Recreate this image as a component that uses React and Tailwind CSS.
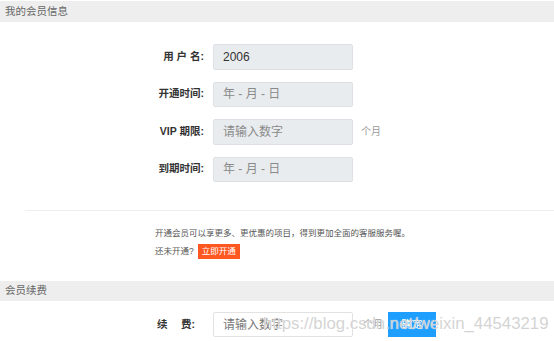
import React from 'react';

const font = { fontFamily: '"Liberation Sans", "Noto Sans CJK SC", sans-serif' };

const FieldRow = ({ label, value, placeholder, suffix }) => (
    <div className="flex h-[25.5px] items-center">
        <div className="w-[80px] ml-[124px] text-right text-[10.5px] font-bold text-[#333] whitespace-pre">{label}</div>
        <input
            readOnly
            value={value || ''}
            placeholder={placeholder}
            className="ml-[9px] h-full w-[140px] rounded-[2px] border border-[#dde1e6] bg-[#e9ecef] px-[9px] text-[12px] text-[#333] placeholder:text-[#8a8a8a] outline-none"
        />
        {suffix && <span className="ml-[8px] text-[10px] text-[#999]">{suffix}</span>}
    </div>
);

export default function App() {
    return (
        <div className="relative h-[341px] w-[554px] overflow-hidden bg-white" style={font}>
            {/* my membership */}
            <div className="mt-px flex h-[21px] items-center bg-[#eeeeee] pl-[5px] text-[10.5px] text-[#666]">
                我的会员信息
            </div>

            <div className="flex flex-col gap-[12px] pt-[22px]">
                <FieldRow label="用 户 名:" value="2006" />
                <FieldRow label="开通时间:" placeholder="年 - 月 - 日" />
                <FieldRow label="VIP 期限:" placeholder="请输入数字" suffix="个月" />
                <FieldRow label="到期时间:" placeholder="年 - 月 - 日" />
            </div>

            <div className="ml-[25px] mt-[28px] h-px bg-[#eeeeee]" />

            <div className="pl-[155px] pt-[16px] text-[8.5px] text-[#555]">
                <div className="h-[12px] leading-[12px]">开通会员可以享更多、更优惠的项目，得到更加全面的客服服务喔。</div>
                <div className="mt-[5px] flex h-[15px] items-center">
                    <span>还未开通?</span>
                    <button className="ml-[4px] h-[15px] bg-[#ff5722] px-[4px] text-[8.5px] leading-[15px] text-white">立即开通</button>
                </div>
            </div>

            {/* renewal */}
            <div className="mt-[22px] flex h-[20px] items-center bg-[#eeeeee] pl-[5px] text-[10.5px] text-[#666]">
                会员续费
            </div>

            <div className="mt-[11px] flex h-[25px] items-center">
                <div className="ml-[157px] flex w-[38px] justify-between text-[10.5px] font-bold text-[#333]">
                    <span>续</span>
                    <span>费:</span>
                </div>
                <input
                    readOnly
                    placeholder="请输入数字"
                    className="ml-[18px] h-full w-[140px] rounded-[2px] border border-[#e2e2e2] bg-white px-[9px] text-[12px] placeholder:text-[#777] outline-none"
                />
                <span className="ml-[10px] text-[10px] text-[#999]">个月</span>
                <button className="ml-[5px] h-full w-[48px] bg-[#1e9fff] text-[10.5px] text-white">确定</button>
            </div>

            {/* watermark */}
            <div className="pointer-events-none absolute left-[263px] top-[311px] text-[16.8px] text-[#cccccc]/85 [text-shadow:0_0_1px_#fff]">
                https://blog.csdn.net/weixin_44543219
            </div>
        </div>
    );
}
